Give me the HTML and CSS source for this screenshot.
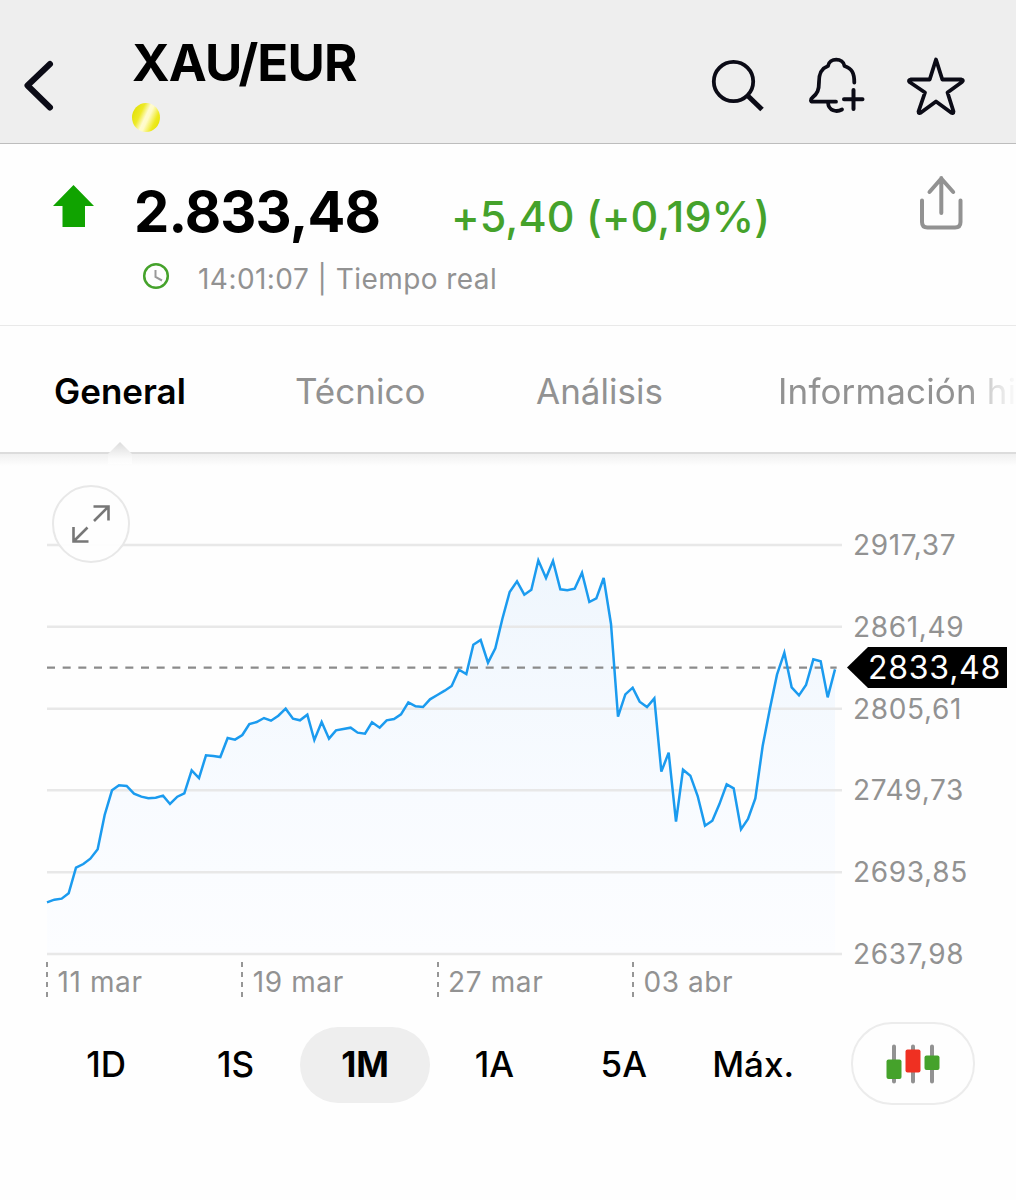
FILE: index.html
```html
<!DOCTYPE html>
<html lang="es">
<head>
<meta charset="utf-8">
<title>XAU/EUR</title>
<link rel="stylesheet" href="styles.css">
</head>
<body>
<header class="topbar">
  <svg class="back" width="34" height="54" viewBox="22 59 34 54"><path d="M50 64 27.500 85.500 50 107.500"/></svg>
  <div class="instrument">
    <h1><span>XAU/EUR</span></h1>
    <i class="gold"></i>
  </div>
  <svg class="actions" width="270" height="70" viewBox="700 50 270 70">
    <circle cx="733.500" cy="81.500" r="19.700"/>
    <path class="handle" d="M747.500 95.500 762 109.500"/>
    <path d="M854.300 82.500C854.300 73 852 68.500 844.500 66C843.500 57.500 829 57.500 828 66C821 68.500 819 73.500 819 82C819 90 817.500 93.500 812.500 97.500C810 99.500 810.500 101.700 813 101.700H836M828 102.500C828.500 111 836.500 112.500 842 109.500"/>
    <path class="plus" d="M853.500 90V109M844 99.300H862.500"/>
    <path d="M936 59.500 942.300 79.500H961.500Q964 80 962 82L947.500 92.500 953.500 111.500Q953.500 114 951 112.500L936 101.500 921 112.500Q918.500 114 918.500 111.500L925 92.500 909.500 82Q908 80 910.500 79.500H929.700Z"/>
  </svg>
</header>
<section class="quote">
  <svg class="up" width="42" height="42" viewBox="0 0 42 42"><path d="M20.500 0 41 21H32V42H9.500V21H0Z"/></svg>
  <div class="figures">
    <div class="row"><strong class="price">2.833,48</strong><span class="change">+5,40 (+0,19%)</span></div>
    <div class="stamp"><svg width="28" height="28" viewBox="0 0 28 28"><circle cx="14" cy="14" r="11.800"/><path d="M13.500 8V15L20 18.500"/></svg><span>14:01:07 | Tiempo real</span></div>
  </div>
  <svg class="share" width="44" height="56" viewBox="919 175 44 56"><path d="M922 200.500V222Q922 227.500 927.500 227.500H955Q960.500 227.500 960.500 222V200.500M941.300 213V178M929.500 192 941.300 178.500 953.200 192"/></svg>
</section>
<nav class="tabs">
  <a class="tab active">General</a><a class="tab tecnico">Técnico</a><a class="tab analisis">Análisis</a><a class="tab info">Información hi</a>
</nav>
<main class="chart">
  <svg class="notch" width="26" height="22" viewBox="0 0 26 22"><defs><linearGradient id="n" x2="0" y2="1"><stop stop-color="#dcdcdc"/><stop offset=".75" stop-color="#fafafa"/><stop offset="1" stop-color="#fefefe"/></linearGradient></defs><path fill="url(#n)" d="M13 0 25 12V22H1V12Z"/></svg>
  <div class="plot">
    <svg width="850" height="452" viewBox="0 -108 2550 1356">
      <defs><linearGradient id="fill" gradientUnits="userSpaceOnUse" x1="0" y1="60" x2="0" y2="1240"><stop stop-color="#eff6fd"/><stop offset=".6" stop-color="#f8fbff"/><stop offset="1" stop-color="#fcfdff"/></linearGradient></defs>
      <path fill="url(#fill)" d="M141 1240V1087L163 1079 185 1076 206 1060 228 983 250 972 271 956 293 928 314 825 336 751 357 736 380 738 402 761 424 770 445 775 467 773 489 767 510 792 532 770 553 760 575 691 597 714 618 646 640 648 661 651 683 594 705 599 727 585 748 552 770 546 792 534 813 542 835 527 857 506 879 536 900 541 922 524 943 600 965 546 987 596 1008 571 1030 567 1052 563 1073 578 1095 581 1116 547 1139 563 1160 541 1182 537 1203 523 1225 487 1247 499 1269 501 1290 478 1312 465 1334 452 1355 438 1377 389 1399 402 1420 314 1442 300 1464 368 1486 325 1507 237 1529 156 1551 124 1573 164 1594 149 1615 61 1638 114 1659 63 1681 148 1702 151 1724 146 1746 98 1768 186 1789 175 1811 114 1833 252 1854 530 1876 463 1898 443 1919 485 1941 501 1963 475 1984 695 2006 638 2028 845 2049 689 2071 707 2093 768 2115 857 2137 842 2158 793 2180 733 2201 745 2223 868 2244 837 2266 775 2288 618 2310 505 2331 404 2353 338 2375 442 2397 466 2418 435 2440 358 2462 364 2483 472 2505 388V1240Z"/>
      <path class="grid" d="M141 15H2526M141 260.500H2526M141 506H2526M141 751H2526M141 996.500H2526M141 1242H2526"/>
      <path class="current" d="M141 383H2510"/>
      <polyline class="line" points="141,1087 163,1079 185,1076 206,1060 228,983 250,972 271,956 293,928 314,825 336,751 357,736 380,738 402,761 424,770 445,775 467,773 489,767 510,792 532,770 553,760 575,691 597,714 618,646 640,648 661,651 683,594 705,599 727,585 748,552 770,546 792,534 813,542 835,527 857,506 879,536 900,541 922,524 943,600 965,546 987,596 1008,571 1030,567 1052,563 1073,578 1095,581 1116,547 1139,563 1160,541 1182,537 1203,523 1225,487 1247,499 1269,501 1290,478 1312,465 1334,452 1355,438 1377,389 1399,402 1420,314 1442,300 1464,368 1486,325 1507,237 1529,156 1551,124 1573,164 1594,149 1615,61 1638,114 1659,63 1681,148 1702,151 1724,146 1746,98 1768,186 1789,175 1811,114 1833,252 1854,530 1876,463 1898,443 1919,485 1941,501 1963,475 1984,695 2006,638 2028,845 2049,689 2071,707 2093,768 2115,857 2137,842 2158,793 2180,733 2201,745 2223,868 2244,837 2266,775 2288,618 2310,505 2331,404 2353,338 2375,442 2397,466 2418,435 2440,358 2462,364 2483,472 2505,388"/>
    </svg>
    <div class="yaxis"><span>2917,37</span><span>2861,49</span><span>2805,61</span><span>2749,73</span><span>2693,85</span><span>2637,98</span></div>
  </div>
  <div class="xaxis"><span>11 mar</span><span>19 mar</span><span>27 mar</span><span>03 abr</span></div>
  <div class="tag"><span>2833,48</span></div>
  <div class="expand"><svg width="38" height="38" viewBox="0 0 38 38"><path d="M21.500 1.500H36.500V15.500M36 2 22 16M1.500 22V36.500H16.500M2 36 15.500 22.500"/></svg></div>
</main>
<footer class="ranges">
  <div class="periods"><span>1D</span><span>1S</span><span class="selected">1M</span><span>1A</span><span>5A</span><span>Máx.</span></div>
  <div class="candles"><svg width="54" height="40" viewBox="0 0 54 40">
    <path d="M8 2.500V37.500M27 2.500V37.500M46 2.500V37.500"/>
    <rect x=".5" y="15.500" width="15" height="19.500" rx="2" fill="#45a22b"/><rect x="19.500" y="5.500" width="15" height="23" rx="2" fill="#ef3022"/><rect x="38.500" y="11.500" width="15" height="14.500" rx="2" fill="#45a22b"/>
  </svg></div>
</footer>
</body>
</html>
```
FILE: styles.css
```css
* { box-sizing: border-box; }
body { margin: 0; width: 1016px; height: 1200px; overflow: hidden; background: #fefefe; font-family: Inter, "Liberation Sans", sans-serif; color: #000; }
svg { display: block; flex: none; fill: none; }
span, strong, a { white-space: nowrap; }

.topbar { display: flex; height: 144px; background: #eee; border-bottom: 1px solid #bdbdbd; }
.back { margin: 59px 0 0 22px; stroke: #0b0b16; stroke-width: 6; stroke-linecap: round; stroke-linejoin: round; }
.instrument { width: 568px; margin-left: 76px; padding-top: 33px; }
h1 { margin: 0; font-size: 51px; line-height: 60px; font-weight: 700; letter-spacing: -.900px; }
.gold { display: block; width: 28px; height: 29px; margin-top: 10px; border-radius: 50%; background: linear-gradient(115deg, #dede00 5%, #eeea28 32%, #fffbd0 48%, #fffbc8 56%, #eeea20 76%, #e4e000 95%); }
.actions { margin-top: 50px; stroke: #0b0b16; stroke-width: 3.800; stroke-linecap: round; stroke-linejoin: round; }
.handle { stroke-width: 5; stroke-linecap: butt; }
.plus { stroke-width: 4; }

.quote { display: flex; height: 182px; border-bottom: 1px solid #e9e9e9; }
.up { margin: 41px 0 0 53px; fill: #10a300; }
.figures { width: 786px; margin-left: 38px; padding-top: 38px; }
.row { display: flex; height: 60px; line-height: 60px; }
.price { width: 317px; padding-left: 1px; font-size: 56px; font-weight: 680; letter-spacing: -.850px; }
.change { padding-left: 1px; font-size: 43px; font-weight: 470; line-height: 69px; letter-spacing: .050px; color: #45a22b; }
.stamp { display: flex; height: 40px; margin: 17px 0 0 9px; line-height: 40px; font-size: 28px; letter-spacing: .450px; color: #929292; }
.stamp svg { margin: 3px 28px 0 0; stroke: #45a22b; stroke-width: 2.500; }
.stamp path { stroke: #999; stroke-width: 2; }
.share { margin-top: 31px; stroke: #929292; stroke-width: 4; stroke-linecap: round; stroke-linejoin: round; }

.tabs { display: flex; height: 126px; padding-left: 53px; line-height: 130px; font-size: 35px; color: #929292; }
.tab { flex: none; }
.active { width: 242px; padding-left: 1px; font-weight: 600; color: #000; }
.tecnico { width: 241px; }
.analisis { width: 242px; }
.info { width: 238px; letter-spacing: .150px; -webkit-mask-image: linear-gradient(90deg, #000 190px, #0005 215px, transparent 240px); }

.chart { position: relative; height: 565px; padding-top: 50px; border-top: 2px solid #dcdcdc; background: linear-gradient(#f0f0f0, #fefefe 12px); }
.notch { position: absolute; left: 107px; top: -12px; }
.plot { display: flex; height: 452px; }
.grid { stroke: #e8e8e8; stroke-width: 7.500; }
.current { stroke: #8b8b8b; stroke-width: 7; stroke-dasharray: 24 23; }
.line { stroke: #1b9bef; stroke-width: 7.500; stroke-linejoin: miter; }
.yaxis { display: grid; grid-auto-rows: 81.800px; padding-left: 3px; line-height: 82px; font-size: 28px; letter-spacing: .650px; color: #929292; }
.xaxis { display: grid; grid-template-columns: repeat(4, 195.300px); height: 52px; padding-left: 46px; line-height: 52px; font-size: 28px; letter-spacing: .600px; color: #929292; }
.xaxis span { padding-left: 11.500px; background: repeating-linear-gradient(#fefefe 0 5px, #969696 5px 10px) 0 1px / 2px 41px no-repeat; }
.tag { position: absolute; left: 847px; top: 193px; width: 160px; height: 41px; padding-left: 21px; background: #000; color: #fff; font-size: 32px; line-height: 41px; letter-spacing: .750px; clip-path: polygon(0 50%, 21px 0, 100% 0, 100% 100%, 21px 100%); }
.expand { position: absolute; left: 52px; top: 31px; width: 78px; height: 78px; padding: 18px; border: 2px solid #e8e8e8; border-radius: 50%; background: #fefefeee; }
.expand path { stroke: #777; stroke-width: 2.600; }

.ranges { display: flex; height: 90px; padding: 5px 0 0 41.500px; }
.periods { display: grid; grid-template-columns: repeat(6, 129.400px); width: 809px; height: 76px; margin-top: 5px; line-height: 75px; font-size: 35px; font-weight: 500; text-align: center; }
.selected { background: #eee; border-radius: 38px; font-weight: 700; }
.candles { width: 124px; height: 83px; border: 2px solid #ececec; border-radius: 41px; padding: 20px 0 0 33px; }
.candles path { stroke: #929292; stroke-width: 4; stroke-linecap: round; }
```
